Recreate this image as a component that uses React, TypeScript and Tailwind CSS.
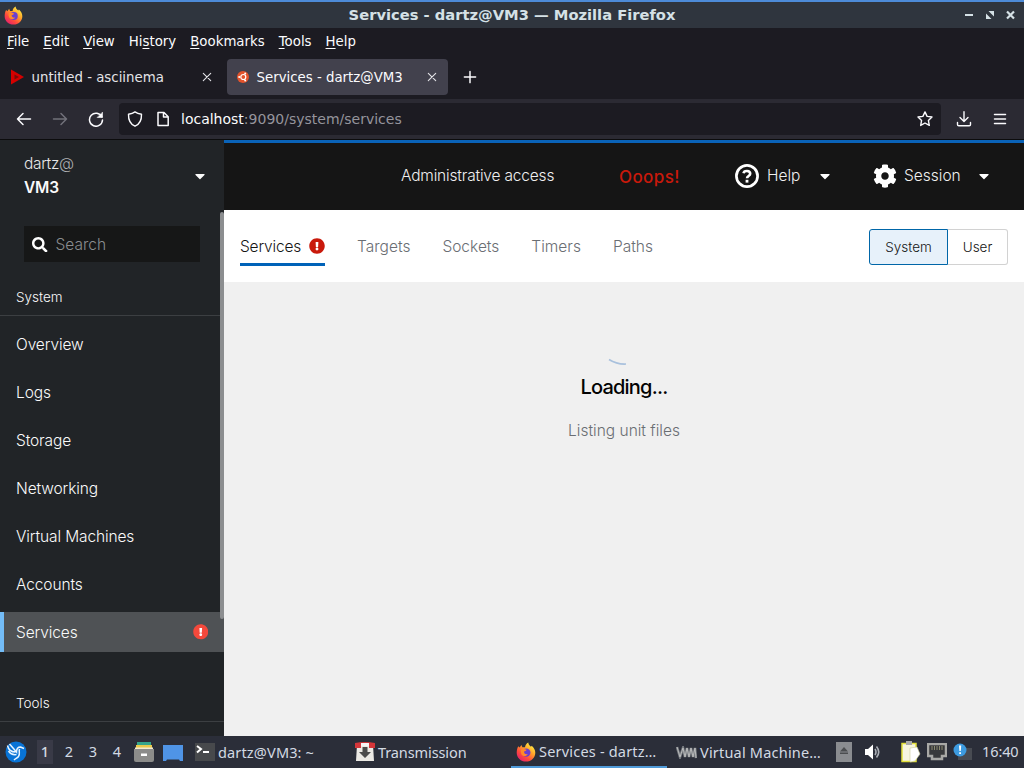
import clsx from "clsx";
import type { ReactNode } from "react";
import { FaCaretDown, FaCog, FaExclamationCircle, FaSearch } from "react-icons/fa";

const menus: [string, string, string][] = [
  ["", "F", "ile"],
  ["", "E", "dit"],
  ["", "V", "iew"],
  ["Hi", "s", "tory"],
  ["", "B", "ookmarks"],
  ["", "T", "ools"],
  ["", "H", "elp"],
];

const navItems = ["Overview", "Logs", "Storage", "Networking", "Virtual Machines", "Accounts", "Services"];

function FirefoxLogo({ className }: { className?: string }) {
  return (
    <svg viewBox="0 0 20 20" className={className}>
      <defs>
        <linearGradient id="fx" x1="0.85" y1="0.1" x2="0.2" y2="0.95">
          <stop offset="0" stopColor="#fff044" />
          <stop offset="0.35" stopColor="#ffa52a" />
          <stop offset="0.7" stopColor="#ff4a3c" />
          <stop offset="1" stopColor="#e5226b" />
        </linearGradient>
      </defs>
      <path
        fill="url(#fx)"
        d="M2.2 4.2 3.6 5.6 5.4 3 6.4 5.3 9 5.2C9.2 3 10.5 1.4 12.3.4c.1 2.300 1.500 3.200 2.700 4.300L15.700 3.700c2.200 1.800 3.600 4.200 3.600 7C19.300 15.800 15.200 19.600 10 19.600S.7 15.800.7 10.700c0-2.500.5-4.700 1.500-6.500Z"
      />
      <circle cx="10.300" cy="10.600" r="4.200" fill="#6a3fd0" />
      <path fill="#ff8a2a" d="M5 7.600c2-.8 3.800-.7 5.600.2-.4 1.200-1.800 1.400-2.600 2 .2 2 1.600 2.900 3.800 2.400-1.300 2.300-5.200 2.500-6.500-.3-.6-1.400-.7-2.800-.3-4.300Z" />
    </svg>
  );
}

function Stroke({ children, size = 16, width = 1.5, className }: { children: ReactNode; size?: number; width?: number; className?: string }) {
  return (
    <svg
      width={size}
      height={size}
      viewBox="0 0 16 16"
      fill="none"
      stroke="currentColor"
      strokeWidth={width}
      strokeLinecap="round"
      strokeLinejoin="round"
      className={clsx("shrink-0", className)}
    >
      {children}
    </svg>
  );
}

function CloseIcon() {
  return (
    <Stroke width={1.1} className="text-[#e4e4e8]">
      <path d="m4.300 4.300 7.400 7.400M11.700 4.300l-7.400 7.400" />
    </Stroke>
  );
}

function TitleBar() {
  return (
    <div className="flex h-7 items-center border-t-2 border-[#4d8bd8] bg-[#2f353e] pr-2 pl-1 text-[#d5e1e6]">
      <FirefoxLogo className="h-[19px] w-[19px]" />
      <div className="flex-1 pl-[38px] text-center text-[14.7px] leading-none font-bold">
        Services - dartz@VM3 — Mozilla Firefox
      </div>
      <svg width="53" height="12" viewBox="0 0 53 12" fill="currentColor">
        <path d="M2 5h8v2H2zM25.500 2H31v5.500zM23 4.500l5.500 5.500H23z" />
        <path d="m44 2.500 7 7m0-7-7 7" stroke="currentColor" strokeWidth="2.200" />
      </svg>
    </div>
  );
}

function MenuBar() {
  return (
    <div className="flex h-[27px] items-center gap-[14px] bg-[#1c1b22] pl-[7px] text-[13.330px] text-[#fbfbfe]">
      {menus.map(([before, key, after]) => (
        <span key={after}>
          {before}
          <span className="underline underline-offset-2">{key}</span>
          {after}
        </span>
      ))}
    </div>
  );
}

function TabStrip() {
  return (
    <div className="flex h-11 items-center bg-[#1c1b22] text-[13.330px] text-[#fbfbfe]">
      <div className="flex h-9 w-[227px] items-center pr-3">
        <svg width="16" height="16" viewBox="0 0 16 16" className="ml-2.5">
          <path d="M1 .5 14 8 1 15.500Z" fill="#d40000" />
          <path d="M4.500 5.500 9 8l-4.500 2.500Z" fill="#7a0808" />
        </svg>
        <span className="ml-[5.500px] flex-1 pt-0.5 text-[#e4e4e8]">untitled - asciinema</span>
        <CloseIcon />
      </div>
      <div className="flex h-9 w-[221px] items-center rounded bg-[#42414d] pr-2 pl-[9px]">
        <svg width="14" height="14" viewBox="0 0 14 14">
          <circle cx="7" cy="7" r="6" fill="#e2532c" />
          <circle cx="7.300" cy="7" r="2.500" fill="none" stroke="#fff" strokeWidth="1.200" />
          <circle cx="3.200" cy="7" r="1" fill="#fff" />
          <circle cx="9.200" cy="3.500" r="1" fill="#fff" />
          <circle cx="9.200" cy="10.500" r="1" fill="#fff" />
        </svg>
        <span className="ml-[6.500px] flex-1 pt-0.5">Services - dartz@VM3</span>
        <CloseIcon />
      </div>
      <Stroke size={18} width={1.300} className="ml-[13px]">
        <path d="M8 3v10M3 8h10" />
      </Stroke>
    </div>
  );
}

function Toolbar() {
  return (
    <div className="flex h-[41px] items-center border-b border-[#0c0c0d] bg-[#2b2a33] text-[#fbfbfe]">
      <Stroke className="ml-4">
        <path d="M14.500 8H1.500M7 2.500 1.500 8 7 13.500" />
      </Stroke>
      <Stroke className="ml-5 text-[#72717a]">
        <path d="M1.500 8h13M9 2.500 14.500 8 9 13.500" />
      </Stroke>
      <Stroke className="ml-5">
        <path d="M13.800 5.800A6.500 6.500 0 1 0 14.500 9" />
        <path d="M14.500 1.500v5h-5z" fill="currentColor" strokeWidth=".6" />
      </Stroke>
      <div className="ml-[15px] flex h-8 w-[822px] items-center rounded bg-[#1c1b22] px-2">
        <Stroke width={1.400}>
          <path d="M8 .9C6 2.400 4 2.900 1.500 3.200 1.300 8.800 3.500 13.200 8 15.200c4.500-2 6.700-6.400 6.500-12C12 2.900 10 2.400 8 .9Z" />
        </Stroke>
        <Stroke className="ml-3">
          <path d="M3 1.500h6l4.200 4.200v8.800H3zM8.500 1.500V6h4.500" />
        </Stroke>
        <span className="ml-[10px] flex-1 text-[14px] text-[#95949c]">
          <span className="text-[#fbfbfe]">localhost</span>:9090/system/services
        </span>
        <Stroke width={1.400}>
          <path d="m8 .9 2.100 4.500 4.900.6-3.600 3.400.9 5L8 12l-4.300 2.400.9-5L1 6l4.900-.6Z" />
        </Stroke>
      </div>
      <Stroke className="ml-[15px]" width={1.400}>
        <path d="M8 .8v9.500M4 6.500l4 4 4-4M1.500 11.500v2q0 1.300 1.300 1.300h10.400q1.300 0 1.300-1.300v-2" />
      </Stroke>
      <Stroke className="ml-5">
        <path d="M2.500 3.500h11M2.500 8h11M2.500 12.500h11" />
      </Stroke>
    </div>
  );
}

function Sidebar() {
  return (
    <aside className="relative w-56 shrink-0 overflow-hidden bg-[#212427] text-[#fafafa]">
      <div className="flex items-center justify-between px-6 pt-3">
        <div className="text-[15.500px] leading-6">
          <div className="tracking-[-0.35px] text-[#e8e8e8]">
            dartz<span className="text-[#b0b2b4]">@</span>
          </div>
          <div className="font-semibold tracking-[-0.2px]">VM3</div>
        </div>
        <FaCaretDown className="-mr-2 mb-px w-4" />
      </div>
      <div className="mx-6 mt-[26px] flex h-9 items-center bg-[#161717] pt-px pl-2 text-[15.500px] text-[#8a8d90]">
        <FaSearch className="mr-2 text-white" />
        Search
      </div>
      <h2 className="mt-[25px] border-b border-[#3c3f42] px-4 pb-[7px] text-[13.500px] leading-[21px]">System</h2>
      <nav className="mt-2 flex flex-col gap-2">
        {navItems.map((item) => (
          <a
            key={item}
            className={clsx(
              "flex h-10 items-center justify-between px-4 pt-0.5 text-[15.500px] tracking-[-0.12px]",
              item === "Services" && "border-l-4 border-[#73bcf7] bg-[#4f5255] pl-3"
            )}
          >
            {item}
            {item === "Services" && (
              <span className="mb-0.5 flex rounded-full bg-[radial-gradient(white_50%,transparent_52%)]">
                <FaExclamationCircle className="text-[#f4493c]" />
              </span>
            )}
          </a>
        ))}
      </nav>
      <h2 className="mt-[41px] border-b border-[#3c3f42] px-4 pb-[7px] text-[13.500px] leading-[21px]">Tools</h2>
      <div className="absolute top-[72px] right-0 h-[407px] w-1 rounded-full bg-[#8c8e90]" />
    </aside>
  );
}

function Masthead() {
  return (
    <header className="flex h-[70px] items-center border-t-3 border-[#0a63b8] bg-[#151515] pr-8 pb-[2px] text-[15.500px] text-[#f0f0f0]">
      <span className="ml-[177px] w-[218px] pt-px tracking-[-0.18px]">Administrative access</span>
      <span className="w-[116px] pt-1 text-[17px] font-medium tracking-[0.4px] text-[#c9190b]">Ooops!</span>
      <svg width="24" height="24" viewBox="0 0 24 24" fill="none" stroke="#fff">
        <circle cx="12" cy="12" r="10.600" strokeWidth="2.700" />
        <path d="M8.500 9.300C9.100 6 15.300 6.200 15.200 9.800c0 2.200-3.200 2.200-3.200 4.400" strokeWidth="2.600" />
        <path d="M12 15.800v2.800" strokeWidth="2.800" />
      </svg>
      <span className="ml-2 w-[50px] pt-px">Help</span>
      <FaCaretDown className="text-base text-white" />
      <FaCog className="ml-[40px] text-[24px] text-white" />
      <span className="ml-[7px] w-[72px] pt-px">Session</span>
      <FaCaretDown className="text-base text-white" />
    </header>
  );
}

function Services() {
  return (
    <main className="flex min-w-0 flex-1 flex-col bg-[#f0f0f0]">
      <Masthead />
      <div className="flex h-[72px] items-center justify-between bg-white px-4 pt-px">
        <div className="flex gap-8 text-[15.500px] text-[#6a6e73]">
          <div className="-mb-[3px] flex h-[36px] items-center border-b-[3px] border-[#0062b8] pt-px tracking-[-0.18px] text-[#151515]">
            Services
            <FaExclamationCircle className="mb-0.5 ml-2 text-base text-[#c9190b]" />
          </div>
          {["Targets", "Sockets", "Timers", "Paths"].map((tab) => (
            <div key={tab} className="flex h-[33px] items-center pt-px">
              {tab}
            </div>
          ))}
        </div>
        <div className="flex h-9 text-[13.500px] text-[#151515]">
          <button className="w-[79px] rounded-l-[3px] border border-[#0066a8] bg-[#e7f1fa] pt-px">System</button>
          <button className="w-[60px] rounded-r-[3px] border border-l-0 border-[#d2d2d2] pt-px">User</button>
        </div>
      </div>
      <div className="flex flex-col items-center pt-[76px]">
        <svg width="20" height="10" viewBox="0 0 20 10" className="-ml-3" fill="none">
          <path d="M1 1.500Q9 6.500 18 6" stroke="#a9c1dd" strokeWidth="1.700" />
        </svg>
        <h1 className="mt-1 text-xl leading-[30px] font-medium tracking-[-0.8px] text-[#030303]">Loading...</h1>
        <p className="mt-[17px] text-[15.500px] leading-6 text-[#6a6e73]">Listing unit files</p>
      </div>
    </main>
  );
}

function Taskbar() {
  return (
    <footer className="flex h-8 items-center bg-[#2b2e39] font-['Noto_Sans',sans-serif] text-[14.500px] whitespace-nowrap text-[#d3dae3]">
      <svg width="22" height="22" viewBox="0 0 22 22" className="ml-[5px]">
        <circle cx="11" cy="11" r="10.500" fill="#0873d6" />
        <path
          d="M2.500 4.500c1 4.500 4 6.500 8 6.500M4.500 3l7 8c0-3 1.500-5 4-5l3.500 1.500M3.500 10c2 3 5 4 8 3.500M14.500 8c-1 2.500 1 5-1 7.500-1 1.500-3 2-4.500 3.500"
          fill="none"
          stroke="#e7f4ff"
          strokeWidth="1.500"
        />
      </svg>
      <span className="ml-[10px] flex h-6 w-4 items-center justify-center bg-[#393a47] font-medium">1</span>
      <span className="ml-1 w-6 text-center">2</span>
      <span className="w-6 text-center">3</span>
      <span className="w-6 text-center">4</span>
      <svg width="20" height="22" viewBox="0 0 20 22" className="ml-[5px]">
        <path fill="#35a58c" d="M3 1h14v3H3z" />
        <path fill="#e9c94b" d="M2 4h16v3H2z" />
        <path fill="#f3ead0" d="M1 6.500h18V9H1z" />
        <path fill="#8c8c8a" d="M0 8h20v11q0 2-2 2H2q-2 0-2-2z" />
        <path fill="#fff" d="M7 12.500h6V15H7z" />
      </svg>
      <svg width="20" height="16" viewBox="0 0 20 16" className="mt-0.5 ml-[9px]">
        <path fill="#4f94e6" d="M0 0h20v16h-3l-1-1.500H4L3 16H0z" />
      </svg>
      <svg width="20" height="18" viewBox="0 0 20 18" className="ml-3">
        <path fill="#47494c" d="M0 0h20v18H0z" />
        <path d="m2 3 4 3-4 3.500M8 9h6" fill="none" stroke="#fff" strokeWidth="2" />
      </svg>
      <span className="mt-0.5 ml-[3px] w-[137px] tracking-[0.15px]">dartz@VM3: ~</span>
      <svg width="20" height="20" viewBox="0 0 20 20">
        <path fill="#eceae5" d="M2 3h16l1 16H1z" />
        <path fill="#d5363a" d="M0 1q10-2 20 0v5h-6V4H6v2H0z" />
        <path fill="#f5f5f5" d="M6 1h8v3H6z" />
        <path fill="#4c4c4c" d="M7.500 5h5v5H16l-6 6-6-6h3.500z" />
      </svg>
      <span className="mt-0.5 ml-[3px] w-[133px] tracking-[-0.1px]">Transmission</span>
      <div className="flex h-full w-[156px] items-center border-b-2 border-[#4f9ad8] pt-0.5 pl-[5px]">
        <FirefoxLogo className="h-5 w-5 shrink-0" />
        <span className="ml-[3px] tracking-[0.2px]">Services - dartz…</span>
      </div>
      <svg width="21" height="13" viewBox="0 0 21 13" className="ml-[9px]" fill="none">
        <path d="m1 1 3 10 3-9 2 9 2-9 2 9 2-9 2 9 2-9 1 10" stroke="#777b80" strokeWidth="2.600" />
        <path d="m1 1 3 10 3-9 2 9 2-9 2 9 2-9 2 9 2-9 1 10" stroke="#c8c8c8" strokeWidth=".8" />
      </svg>
      <span className="mt-0.5 ml-[3px] w-[136px] tracking-[0.2px]">Virtual Machine…</span>
      <svg width="16" height="20" viewBox="0 0 16 20">
        <path fill="#8a8c90" d="M0 0h16v20H0z" />
        <path fill="#4b4d50" d="m8 5 4 4.500H4zM4 10.500h8V12H4z" />
      </svg>
      <svg width="18" height="16" viewBox="0 0 18 16" className="ml-3">
        <path fill="#fff" d="M1 5h3l5-4.500v15L4 11H1z" />
        <path d="M11 5q2 3 0 6M12.500 2.500q4.500 5.500 0 11" fill="none" stroke="#a9adb4" strokeWidth="1.600" />
      </svg>
      <svg width="22" height="22" viewBox="0 0 22 22" className="ml-[18px]">
        <path fill="#f7f5df" stroke="#e3e03a" strokeWidth="1.500" d="M2 2.500h14v18H2z" />
        <path fill="#aaa" d="M6 0h6v4H6z" />
        <path fill="#fff" stroke="#cfcf9a" strokeWidth=".6" d="m10 7 7-1 3 7-5 7-5 1z" />
      </svg>
      <svg width="20" height="18" viewBox="0 0 20 18" className="ml-[5px]">
        <path fill="#38393b" stroke="#a8a8a5" strokeWidth="2.500" d="M1 1h18v12h-4v3H5v-3H1z" />
        <path d="M5 3v4m2.500-4v4M10 3v4m2.500-4v4M15 3v4" stroke="#8a8a70" />
      </svg>
      <svg width="20" height="18" viewBox="0 0 20 18" className="ml-[6px]">
        <path fill="#484b52" d="M9 5h10v12H5V9z" />
        <circle cx="7" cy="7" r="6.500" fill="#3d9be0" />
        <path fill="#fff" d="M6 2.500h2.200L7.800 8H6.400zM6.200 9.200h1.800V11H6.200z" />
      </svg>
      <span className="ml-[9px] tracking-[-0.1px]">16:40</span>
    </footer>
  );
}

export default function App() {
  return (
    <div className="flex h-screen w-[1024px] flex-col overflow-hidden font-['DejaVu_Sans',sans-serif]">
      <TitleBar />
      <MenuBar />
      <TabStrip />
      <Toolbar />
      <div className="flex min-h-0 flex-1 font-['Inter',sans-serif] font-light">
        <Sidebar />
        <Services />
      </div>
      <Taskbar />
    </div>
  );
}
